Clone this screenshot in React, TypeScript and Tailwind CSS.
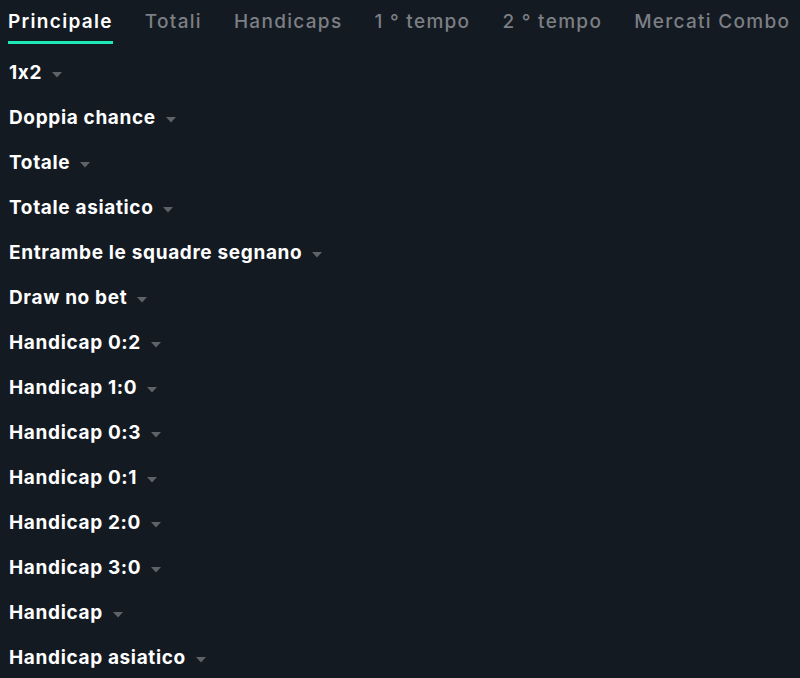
import React from "react";

const tabs = ["Principale", "Totali", "Handicaps", "1 ° tempo", "2 ° tempo", "Mercati Combo"];

const markets = [
  "1x2",
  "Doppia chance",
  "Totale",
  "Totale asiatico",
  "Entrambe le squadre segnano",
  "Draw no bet",
  "Handicap 0:2",
  "Handicap 1:0",
  "Handicap 0:3",
  "Handicap 0:1",
  "Handicap 2:0",
  "Handicap 3:0",
  "Handicap",
  "Handicap asiatico",
];

function Caret() {
  return (
    <svg className="w-[10px] h-[6px] ml-[10px] mt-[3px] text-[#5f6368]" viewBox="0 0 10 6" fill="currentColor">
      <path d="M0 0 L10 0 L5 5.5 Z" />
    </svg>
  );
}

export default function App() {
  return (
    <div
      className="w-[800px] h-[678px] overflow-hidden bg-[#141a22] text-white"
      style={{ fontFamily: "Inter, 'Noto Sans', sans-serif" }}
    >
      {/* Tabs */}
      <div className="flex items-end gap-[32px] pl-[8px] h-[44px]">
        {tabs.map((t, i) => (
          <div
            key={t}
            className={`h-full flex items-center pt-[3px] text-[19px] tracking-[1.3px] border-b-[3px] ${
              i === 0
                ? "border-[#1de9b6] font-semibold text-white"
                : "border-transparent font-medium text-[#7c7f84]"
            }`}
          >
            <span>{t}</span>
          </div>
        ))}
      </div>

      {/* Market list */}
      <div className="pt-[7px] pl-[9px]">
        {markets.map((m) => (
          <div key={m} className="h-[45px] flex items-center">
            <span className="text-[19px] font-bold tracking-[0.65px]">{m}</span>
            <Caret />
          </div>
        ))}
      </div>
    </div>
  );
}
